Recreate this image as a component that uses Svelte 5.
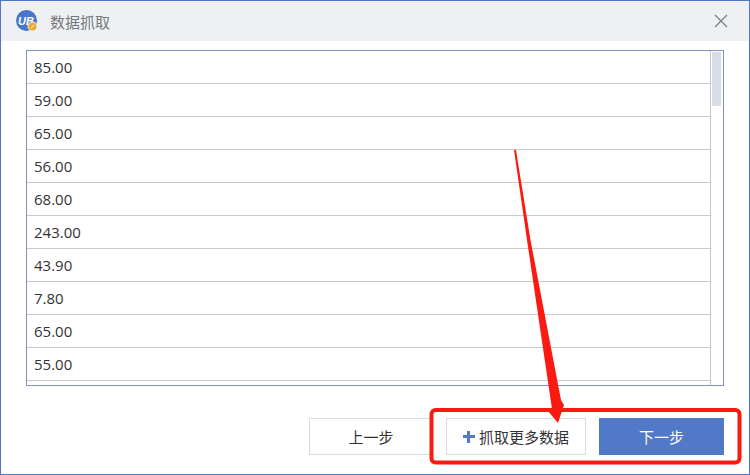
<script>
  const values = ['85.00', '59.00', '65.00', '56.00', '68.00', '243.00', '43.90', '7.80', '65.00', '55.00']
</script>

<div class="dialog">
  <header class="titlebar">
    <svg class="logo" viewBox="0 0 22 22" width="22" height="22">
      <circle cx="10.5" cy="10.5" r="10.5" fill="#4a76c9" />
      <text x="10" y="14.5" text-anchor="middle" class="logo-text">UB</text>
      <circle cx="16.5" cy="16.5" r="4.5" fill="#f0a92e" stroke="#eff0f4" stroke-width="1" />
      <path d="M15 18l3-3" stroke="#fff" stroke-width="1" />
    </svg>
    <span class="title">数据抓取</span>
    <svg class="close" viewBox="0 0 14 14" width="14" height="14">
      <path d="M1 1l12 12M13 1L1 13" stroke="#7d7f85" stroke-width="1.3" fill="none" />
    </svg>
  </header>

  <div class="list">
    <ul>
      {#each values as value}
        <li>{value}</li>
      {/each}
    </ul>
    <div class="scrollbar"><div class="thumb"></div></div>
  </div>

  <footer>
    <button class="plain prev">上一步</button>
    <button class="plain more"><span class="plus"></span>抓取更多数据</button>
    <button class="next">下一步</button>
  </footer>

  <svg class="markup" viewBox="0 0 750 475" width="750" height="475">
    <rect x="431.5" y="410" width="308" height="52.5" rx="4" fill="none" stroke="#fb1a12" stroke-width="4" />
    <path d="M514 150L516 150L530.5 240L561 400L564 405L558 423L548 411L552 409L527 240Z" fill="#fb1a12" />
  </svg>
</div>

<style>
  :global(body) {
    margin: 0;
    background: #fff;
  }

  .dialog {
    position: relative;
    box-sizing: border-box;
    width: 750px;
    height: 475px;
    border: 1px solid #4f79c8;
    background: #fff;
    font-family: "Open Sans", "Noto Sans CJK SC", sans-serif;
    display: flex;
    flex-direction: column;
  }

  .titlebar {
    height: 40px;
    background: #eff0f4;
    display: flex;
    align-items: center;
    padding: 0 15px;
    flex: none;
  }

  .logo {
    margin-right: 12px;
  }

  .logo-text {
    font-family: "Liberation Sans", sans-serif;
    font-size: 11px;
    font-weight: bold;
    font-style: italic;
    fill: #fff;
  }

  .title {
    font-size: 15px;
    color: #77797e;
    flex: 1;
  }

  .close {
    margin-right: 6px;
  }

  .list {
    box-sizing: border-box;
    height: 336px;
    margin: 9px 25px 0;
    border: 1px solid #8094b8;
    display: flex;
    overflow: hidden;
  }

  ul {
    flex: 1;
    list-style: none;
    margin: 0;
    padding: 0;
  }

  li {
    box-sizing: border-box;
    height: 33px;
    padding-left: 7px;
    line-height: 33px;
    font-size: 15px;
    color: #333;
    border-bottom: 1px solid #c9c9c9;
  }

  .scrollbar {
    box-sizing: border-box;
    width: 13px;
    border-left: 1px solid #c9c9c9;
    padding: 1px 2px 0 1px;
  }

  .thumb {
    height: 54px;
    background: #d8dce6;
  }

  footer {
    display: flex;
    justify-content: flex-end;
    gap: 13px;
    margin: 32px 25px 0;
  }

  button {
    box-sizing: border-box;
    height: 37px;
    margin: 0;
    padding: 0;
    border: 1px solid #d8dbe3;
    background: #fff;
    font-family: inherit;
    font-size: 15px;
    color: #333;
    display: flex;
    align-items: center;
    justify-content: center;
  }

  .prev {
    width: 124px;
  }

  .more {
    width: 140px;
  }

  .plus {
    width: 12px;
    height: 12px;
    margin-right: 4px;
    background:
      linear-gradient(#5179c7, #5179c7) center / 12px 3px no-repeat,
      linear-gradient(#5179c7, #5179c7) center / 3px 12px no-repeat;
  }

  .next {
    width: 125px;
    border: none;
    background: #5179c7;
    color: #fff;
  }

  .markup {
    position: absolute;
    left: -1px;
    top: -1px;
    pointer-events: none;
  }
</style>
